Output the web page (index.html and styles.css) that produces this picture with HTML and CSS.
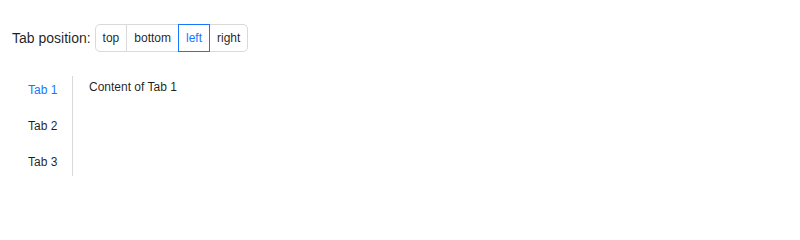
FILE: index.html
```html
<!DOCTYPE html>
<html>
<head>
<meta charset="utf-8">
<link rel="stylesheet" href="styles.css">
</head>
<body>
<div class="page">
  <div class="toolbar">
    <span class="label">Tab position:</span>
    <div class="radio-group">
      <span class="radio first">top</span>
      <span class="radio">bottom</span>
      <span class="radio active">left</span>
      <span class="radio last">right</span>
    </div>
  </div>
  <div class="tabs">
    <div class="tab-nav">
      <div class="tab active">Tab 1</div>
      <div class="tab">Tab 2</div>
      <div class="tab">Tab 3</div>
    </div>
    <div class="tab-content">Content of Tab 1</div>
  </div>
</div>
</body>
</html>
```
FILE: styles.css
```css
html, body {
  margin: 0;
  padding: 0;
  background: #fff;
}
body {
  font-family: "Liberation Sans", Arial, sans-serif;
  color: rgba(0, 0, 0, 0.88);
}
.page {
  padding: 24px 12px 0 12px;
}
.toolbar {
  display: flex;
  align-items: center;
  gap: 4px;
  margin-bottom: 24px;
}
.label {
  font-size: 14px;
}
.radio-group {
  display: flex;
  height: 28px;
}
.radio {
  display: flex;
  align-items: center;
  height: 28px;
  box-sizing: border-box;
  padding: 0 7px;
  font-size: 12px;
  border: 1px solid #d9d9d9;
  border-left: none;
  position: relative;
}
.radio.first {
  border-left: 1px solid #d9d9d9;
  border-radius: 5px 0 0 5px;
  padding: 0 7px;
}
.radio.last {
  border-radius: 0 5px 5px 0;
}
.radio.active {
  color: #1677ff;
  border-color: #1677ff;
  box-shadow: -1px 0 0 #1677ff;
}
.tabs {
  display: flex;
}
.tab-nav {
  display: flex;
  flex-direction: column;
  gap: 8px;
  width: 60px;
  border-right: 1px solid #d9d9d9;
}
.tab {
  height: 28px;
  display: flex;
  align-items: center;
  padding-left: 16px;
  font-size: 12px;
}
.tab.active {
  color: #1677ff;
}
.tab-content {
  padding: 4px 0 0 16px;
  font-size: 12px;
}
```
